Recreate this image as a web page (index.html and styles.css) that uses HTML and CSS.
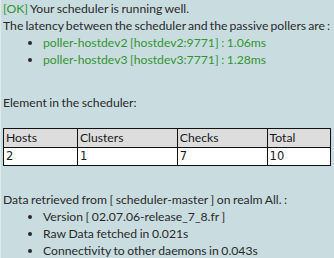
FILE: index.html
```html
<!DOCTYPE html>
<html lang="en">
<head>
    <meta charset="UTF-8">
    <title>Scheduler status</title>
    <link rel="stylesheet" href="styles.css">
</head>
<body>
    <div class="panel">
        <div><span class="ok">[OK]</span> Your scheduler is running well.</div>
        <div class="line">The latency between the scheduler and the passive pollers are :</div>
        <ul class="pollers">
            <li>poller-hostdev2 [hostdev2:9771] : 1.06ms</li>
            <li>poller-hostdev3 [hostdev3:7771] : 1.28ms</li>
        </ul>
        <br>
        <div>Element in the scheduler:</div>
        <br>
        <table class="elements">
            <tr><th>Hosts</th><th>Clusters</th><th>Checks</th><th>Total</th></tr>
            <tr><td>2</td><td>1</td><td>7</td><td>10</td></tr>
        </table>
        <br>
        <div>Data retrieved from [ scheduler-master ] on realm All. :</div>
        <ul class="info">
            <li>Version [ 02.07.06-release_7_8.fr ]</li>
            <li>Raw Data fetched in 0.021s</li>
            <li>Connectivity to other daemons in 0.043s</li>
        </ul>
    </div>
</body>
</html>
```

FILE: styles.css
```css
body {
    margin: 0;
    background: #c9dde0;
    font-family: 'Lato', sans-serif;
    font-size: 12.2px;
    line-height: 17px;
    word-spacing: -0.6px;
    color: #2a2a2a;
}
.panel {
    padding: 0 0 2px 2px;
    border-left: 1px solid #dde9eb;
}
.line {
    white-space: nowrap;
    word-spacing: -1px;
}
ul {
    margin: 0;
    padding-left: 40px;
}
.pollers {
    margin-bottom: 9px;
}
.pollers li {
    color: #339433;
}
.pollers li::marker {
    color: #2a2a2a;
}
.ok {
    color: #339433;
}
.elements {
    width: calc(100% - 3px);
    border-collapse: collapse;
    margin: 0 0 8px;
}
.elements th,
.elements td {
    border: 1px solid #111;
    text-align: left;
    padding: 1px 2px;
}
.elements th {
    background: #ddd;
    font-weight: normal;
    line-height: 16px;
    color: #1a1a1a;
}
.elements td {
    background: #fff;
    font-family: 'DejaVu Sans', sans-serif;
    font-size: 11.5px;
    color: #1a1a1a;
    line-height: 15px;
}
```
